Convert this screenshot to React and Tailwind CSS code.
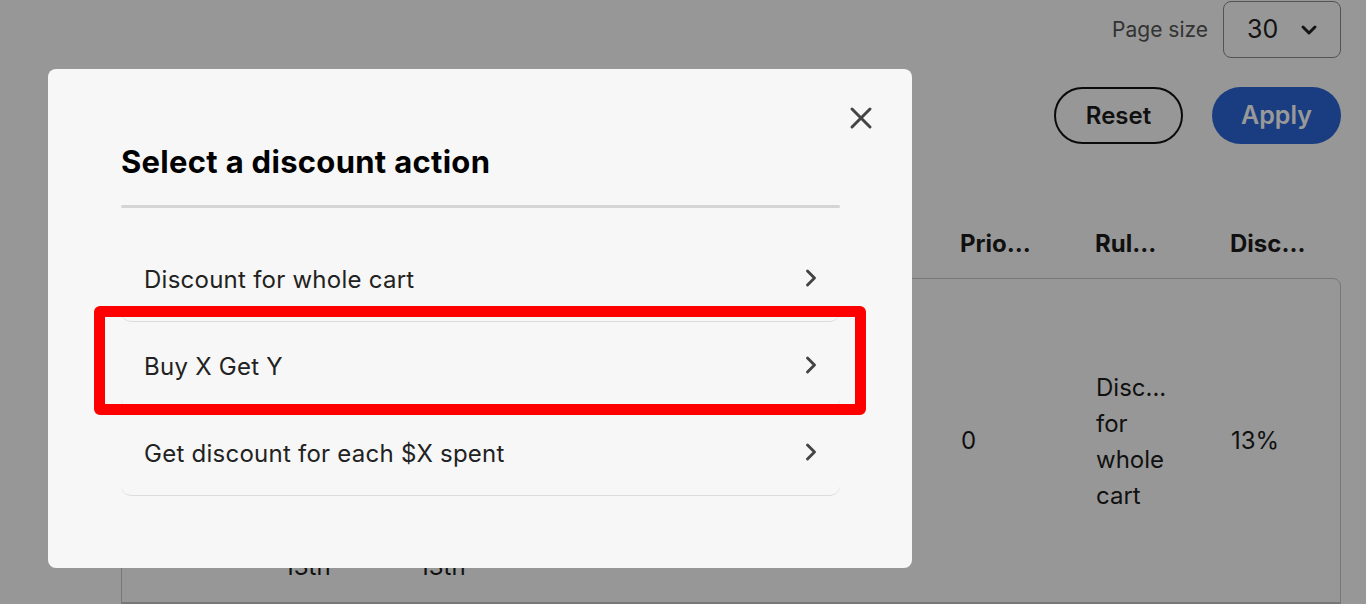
import { X, ChevronRight, ChevronDown } from 'lucide-react';

const actions = [
  'Discount for whole cart',
  'Buy X Get Y',
  'Get discount for each $X spent',
];

const headers = ['Prio...', 'Rul...', 'Disc...'];

const App = () => {
  return (
    <div className="relative w-[1366px] h-[604px] overflow-hidden bg-[#fcfcfc] font-['Inter',sans-serif] text-[#1c1c1c]">
      {/* Page underneath */}
      <div className="pl-[121px] pr-[25px] pt-[1px]">
        <div className="flex justify-end items-center gap-[15px]">
          <span className="text-[21px] text-[#555]">Page size</span>
          <div className="w-[118px] h-[57px] border border-[#8a8a8a] rounded-[8px] flex items-center pl-[23px] pr-[19px] justify-between">
            <span className="text-[25px] text-[#222]">30</span>
            <ChevronDown size={24} strokeWidth={3} className="text-[#222]" />
          </div>
        </div>

        <div className="flex justify-end gap-[29px] mt-[29px]">
          <button className="w-[129px] h-[57px] rounded-full border-2 border-[#111] text-[24px] font-semibold">
            Reset
          </button>
          <button className="w-[129px] h-[57px] rounded-full bg-[#2b66d5] text-white text-[25px] font-semibold">
            Apply
          </button>
        </div>

        {/* Table header: columns left of Prio... sit under the modal */}
        <div className="grid grid-cols-[repeat(9,135px)] pl-[29px] mt-[82px] h-[36px] items-center">
          <div className="col-span-6" />
          {headers.map((h) => (
            <span key={h} className="text-[24px] font-bold leading-[36px]">
              {h}
            </span>
          ))}
        </div>

        <div className="mt-[16px] border border-[#c6c6c6] rounded-t-[8px]">
          <div className="grid grid-cols-[repeat(9,135px)] pl-[27px] h-[324px] items-center border-b border-[#c6c6c6] text-[24px] leading-[36px]">
            <span />
            <span className="self-end pb-[17px]">13th</span>
            <span className="self-end pb-[17px]">13th</span>
            <span />
            <span />
            <span />
            <span className="pl-[2px]">0</span>
            <span className="w-[60px] pt-[2px] pl-[2px]">Disc... for whole cart</span>
            <span className="pl-[2px]">13%</span>
          </div>
        </div>
      </div>

      {/* Backdrop */}
      <div className="absolute inset-0 bg-black/40" />

      {/* Modal */}
      <div className="absolute left-[48px] top-[69px] w-[864px] h-[499px] bg-[#f7f7f7] rounded-[8px] pl-[73px] pr-[72px]">
        <button className="absolute left-[795px] top-[31px] text-[#444]">
          <X size={36} strokeWidth={2} />
        </button>
        <h2 className="pt-[75px] text-[31px] leading-[36px] font-bold tracking-[0.3px] text-black">
          Select a discount action
        </h2>
        <div className="mt-[25px] h-[3px] rounded-full bg-[#d5d5d5]" />
        <div className="mt-[27px]">
          {actions.map((a) => (
            <div
              key={a}
              className="h-[87px] flex items-center justify-between pl-[23px] pr-[15px] border-b border-[#dcdcdc] rounded-[10px]"
            >
              <span className="text-[24px] tracking-[0.25px] text-[#222] pt-[3px]">{a}</span>
              <ChevronRight size={28} strokeWidth={2.5} className="text-[#444]" />
            </div>
          ))}
        </div>
      </div>

      {/* Annotation */}
      <div className="absolute left-[94px] top-[306px] w-[772px] h-[109px] border-[11px] border-[#ff0000] rounded-[6px]" />
    </div>
  );
};

export default App;
